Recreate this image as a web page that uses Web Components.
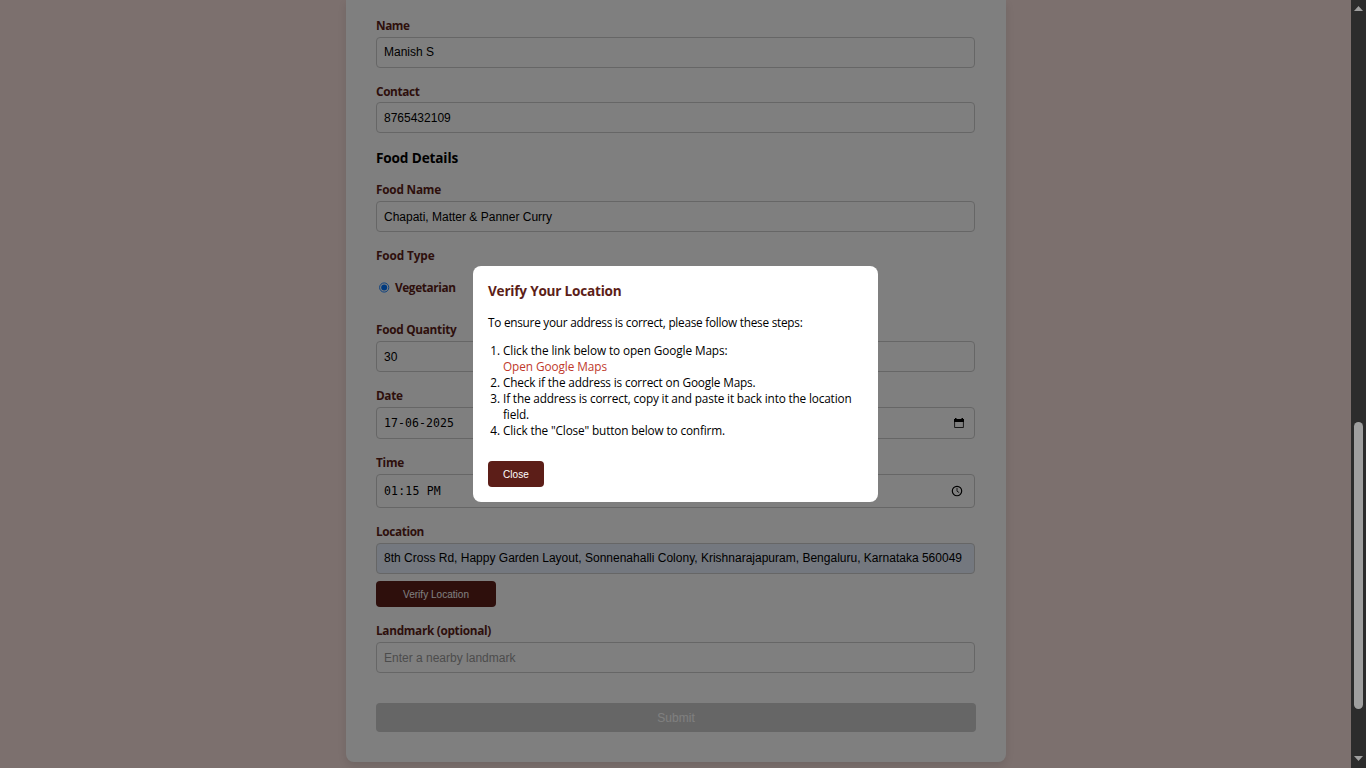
<!DOCTYPE html>
<html lang="en">
<head>
<meta charset="utf-8">
<title>Food donation form</title>
<style>
html,body{margin:0;height:100%;overflow:hidden}
body{font-family:"Open Sans","Noto Sans",sans-serif;font-size:11.8px;line-height:16px;color:#000}
</style>
</head>
<body>
<donation-page></donation-page>
<script>
const define=(name,css,html,ready)=>customElements.define(name,class extends HTMLElement{
  constructor(){super();this.attachShadow({mode:'open'}).innerHTML='<style>'+css+'</style>'+html;}
  connectedCallback(){if(ready)ready.call(this,this.shadowRoot);}
});

/* Text run spread evenly over the width given in "w". */
define('text-run',':host{display:inline-block;white-space:pre}span{display:inline-block}','<span><slot></slot></span>',function(r){
  const s=r.querySelector('span'),n=this.textContent.length,w=+this.getAttribute('w');
  if(w&&n)s.style.letterSpacing=((w-s.getBoundingClientRect().width)/n).toFixed(4)+'px';
});

define('form-field',`
:host{display:block;margin-top:var(--gap,15px)}
.label{height:16px;margin-bottom:var(--lift,4px);font-weight:700;color:#5c1e18}
.box{box-sizing:border-box;width:599px;height:var(--h,31px);border:1px solid #ccc;border-radius:4px;background:var(--bg,#fff);padding:0 7px;display:flex;align-items:center;justify-content:space-between;font:12px/16px "Liberation Sans",Arial,sans-serif;color:var(--ink,#000)}
`,'<div class="label"><slot name="label"></slot></div><div class="box"><slot></slot><slot name="icon"></slot></div>');

define('action-button',`
:host{display:flex;align-items:center;justify-content:center;box-sizing:border-box;width:var(--w);height:var(--h,26px);padding-top:var(--pt,1px);border-radius:4px;background:var(--bg,#5c1e18);color:#fff;font:var(--fs,10px)/16px "Liberation Sans",Arial,sans-serif}
`,'<slot></slot>');

define('radio-option',`
:host{display:flex;align-items:center;gap:5px;height:16px;padding-left:3px;font-weight:700;color:#5c1e18}
svg{display:block;width:11px;height:11px}
`,'<svg viewBox="0 0 11 11"><circle cx="5.2" cy="5.5" r="4.600" fill="#fff" stroke="#0075ff" stroke-width=".9"/><circle cx="5.2" cy="5.5" r="3" fill="#0075ff"/></svg><slot></slot>');

define('calendar-icon',':host{display:block;padding-right:2px}svg{display:block}','<svg width="12" height="12" viewBox="0 0 12 12"><path fill="#000" d="M2 1h1.500v1h5V1H10v1h1v3H1V2h1z"/><path d="M1.600 4.500v6h8.800v-6" fill="none" stroke="#000" stroke-width="1" stroke-opacity=".8"/></svg>');
define('clock-icon',':host{display:block;padding-right:4px}svg{display:block}','<svg width="12" height="12" viewBox="0 0 12 12"><circle cx="6" cy="6" r="4.700" fill="none" stroke="#000" stroke-width="1.150"/><path d="M6 3v3.200l2.200 1.400" fill="none" stroke="#000" stroke-width=".8"/></svg>');

define('form-card',`
:host{display:block;box-sizing:border-box;width:660px;height:762px;padding:17px 30px 30px;background:#fff;border-radius:0 0 8px 8px;box-shadow:0 4px 8px rgba(0,0,0,.1)}
h3{margin:16px 0 0;font-size:13.6px;line-height:18px;height:18px;font-weight:700}
.type{margin-top:15px;font-weight:700;color:#5c1e18;height:16px}
radio-option{margin-top:16px}
.mono{font:11.500px/16px "DejaVu Sans Mono",monospace}
`,`
<form-field style="--gap:0px"><text-run slot="label" w="33.500">Name</text-run><text-run style="margin-top:-2px">Manish S</text-run></form-field>
<form-field style="--lift:3px"><text-run slot="label" w="43.500">Contact</text-run><text-run>8765432109</text-run></form-field>
<h3><text-run w="82">Food Details</text-run></h3>
<form-field style="--gap:14px"><text-run slot="label" w="65">Food Name</text-run><text-run>Chapati, Matter &amp; Panner Curry</text-run></form-field>
<div class="type"><text-run w="58.500">Food Type</text-run></div>
<radio-option><text-run w="60.500">Vegetarian</text-run></radio-option>
<form-field style="--gap:26px"><text-run slot="label" w="80.500">Food Quantity</text-run><text-run>30</text-run></form-field>
<form-field style="--gap:15px;--h:32px"><text-run slot="label" w="26.500">Date</text-run><text-run class="mono" w="70">17-06-2025</text-run><calendar-icon slot="icon"></calendar-icon></form-field>
<form-field style="--h:34px"><text-run slot="label" w="28">Time</text-run><text-run class="mono" w="57">01:15 PM</text-run><clock-icon slot="icon"></clock-icon></form-field>
<form-field style="--bg:#e8f0fe"><text-run slot="label" w="48">Location</text-run><text-run w="578" style="margin-top:-2px">8th Cross Rd, Happy Garden Layout, Sonnenahalli Colony, Krishnarajapuram, Bengaluru, Karnataka 560049</text-run></form-field>
<action-button style="--w:120px;margin-top:7px"><text-run w="66">Verify Location</text-run></action-button>
<form-field style="--ink:#999"><text-run slot="label" w="115">Landmark (optional)</text-run><text-run>Enter a nearby landmark</text-run></form-field>
<action-button style="--w:600px;--h:29px;--pt:0px;--bg:#ccc;--fs:12px;margin-top:30px"><text-run w="37.500">Submit</text-run></action-button>
`);

define('location-dialog',`
:host{display:block;box-sizing:border-box;width:405px;height:236px;padding:15px;border-radius:8px;background:#fff}
h2{margin:0;font-size:13.6px;line-height:20px;color:#5c1e18}
p{margin:13px 0 12px;line-height:16px}
ol{margin:0 0 23px;padding:0;list-style:none}
li{display:grid;grid-template-columns:12px 1fr;column-gap:3px}
li>span:first-child{text-align:right}
li div{display:flex;flex-direction:column;align-items:flex-start}
a{color:#c0392b;text-decoration:none}
`,`
<h2><text-run w="133.500">Verify Your Location</text-run></h2>
<p><text-run w="314.500">To ensure your address is correct, please follow these steps:</text-run></p>
<ol>
<li><span>1.</span><div><text-run w="224.500">Click the link below to open Google Maps:</text-run><a><text-run w="104">Open Google Maps</text-run></a></div></li>
<li><span>2.</span><div><text-run w="252.500">Check if the address is correct on Google Maps.</text-run></div></li>
<li><span>3.</span><div><text-run w="348.500">If the address is correct, copy it and paste it back into the location</text-run><text-run w="26">field.</text-run></div></li>
<li><span>4.</span><div><text-run w="222">Click the "Close" button below to confirm.</text-run></div></li>
</ol>
<action-button style="--w:56px"><text-run w="26">Close</text-run></action-button>
`);

define('scroll-bar',`
:host{display:flex;flex-direction:column;align-items:center;box-sizing:border-box;width:15px;height:768px;padding:6px 0 7px;background:#2c2c2c}
svg{display:block}
i{display:block;width:9px;height:287px;border-radius:5px;background:#9f9f9f;margin:411px 0 auto}
`,'<svg width="9" height="5" viewBox="0 0 9 5"><path d="M4.500 0L9 5H0z" fill="#9f9f9f"/></svg><i></i><svg width="9" height="5" viewBox="0 0 9 5"><path d="M4.500 5L9 0H0z" fill="#9f9f9f"/></svg>');

define('donation-page',`
:host{display:flex;width:1366px;height:768px;overflow:hidden}
main{position:relative;flex:1;display:flex;justify-content:center;align-items:flex-start;background:#f8e0dc;overflow:hidden}
form-card{margin-left:1px}
.overlay{position:absolute;inset:0;display:flex;align-items:center;justify-content:center;background:rgba(0,0,0,.5)}
`,'<main><form-card></form-card><div class="overlay"><location-dialog></location-dialog></div></main><scroll-bar></scroll-bar>');
</script>
</body>
</html>
